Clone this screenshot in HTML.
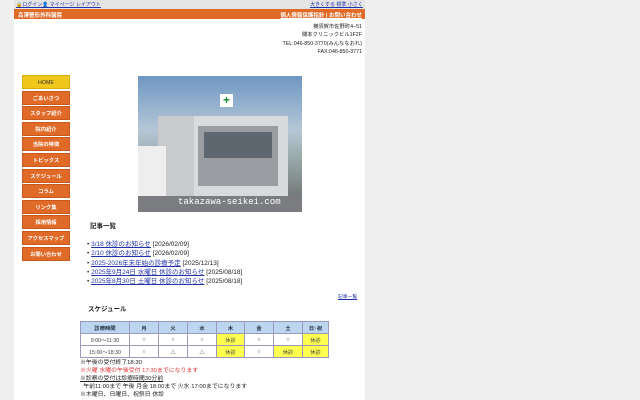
<!DOCTYPE html>
<html><head><meta charset="utf-8"><style>
*{margin:0;padding:0;box-sizing:border-box}
body{width:640px;height:400px;overflow:hidden;background:#efefef;font-family:"Liberation Sans","Noto Sans CJK JP",sans-serif;font-size:6px;color:#222}
#pg{position:absolute;left:14px;top:0;width:351px;height:400px;background:#fff}
.top{position:absolute;left:0;top:0;width:351px;height:9px;background:#e4e4e4}
.top a{color:#2233aa;text-decoration:underline;font-size:5px;position:absolute;top:1px}
.bar{position:absolute;left:0;top:9px;width:351px;height:10px;background:#e06a28;color:#fff;font-weight:bold;font-size:5.5px}
.addr{position:absolute;right:3px;top:23px;text-align:right;font-size:5.3px;line-height:8.3px;color:#222}
.menu{position:absolute;left:8px;top:75px;width:48px}
.menu div{height:14px;margin-bottom:1.6px;background:#e06a28;color:#fff;font-size:5.3px;font-weight:bold;text-align:center;line-height:14px;border:1px solid #c9581c}
.menu div.h{background:#f2c71d;color:#333;border-color:#d9b010;font-weight:normal}
.photo{position:absolute;left:124px;top:76px;width:164px;height:136px;background:linear-gradient(#6f97c4,#b5c7d6 40%,#9aa 60%,#666 100%);overflow:hidden}
h3{position:absolute;font-size:6.5px;font-weight:bold}
ul{position:absolute;left:73px;top:240px;list-style:none;font-size:6.5px;line-height:9.3px}
ul li:before{content:"• ";color:#333}
ul a{color:#2233aa}
table{position:absolute;left:66px;top:321px;border-collapse:collapse;font-size:5.3px}
td{border:1px solid #99b;height:12px;text-align:center;color:#444}
tr:first-child td{background:#bcd6ef;font-weight:bold;color:#234}
td.y{background:#ffff50}
.notes{position:absolute;left:66px;top:359px;font-size:5.9px;line-height:8px}
</style></head><body>
<div id="pg">
<div class="top"><a style="left:2px">🔒ログイン</a><a style="left:28px">👤 マイページ レイアウト</a><a style="left:296px">大きくする 標準 小さくする</a></div>
<div class="bar"><span style="position:absolute;left:4px;top:2px">高澤整形外科醫院</span><span style="position:absolute;right:3px;top:2px;text-decoration:underline">個人情報保護指針 | お問い合わせ</span></div>
<div class="addr">横須賀市佐野町4−51<br>關本クリニックビル1F2F<br>TEL:046-850-3770(みんななおれ)<br>FAX:046-850-3771</div>
<div class="menu"><div class="h">HOME</div><div>ごあいさつ</div><div>スタッフ紹介</div><div>院内紹介</div><div>当院の特徴</div><div>トピックス</div><div>スケジュール</div><div>コラム</div><div>リンク集</div><div>採用情報</div><div>アクセスマップ</div><div>お問い合わせ</div></div>
<div class="photo">
<div style="position:absolute;left:20px;top:40px;width:130px;height:80px;background:#d8dadc"></div>
<div style="position:absolute;left:60px;top:50px;width:80px;height:60px;background:#9a9ea2"></div>
<div style="position:absolute;left:66px;top:56px;width:68px;height:26px;background:#5e6670"></div>
<div style="position:absolute;left:20px;top:40px;width:36px;height:80px;background:#c8cacc"></div>
<div style="position:absolute;left:82px;top:18px;width:13px;height:13px;background:#fff;color:#1a8a3a;font-size:12px;line-height:13px;text-align:center;font-weight:bold">+</div>
<div style="position:absolute;left:0;top:70px;width:28px;height:55px;background:#eee"></div>
<div style="position:absolute;left:0;top:120px;width:164px;height:16px;background:#7a7c80"></div>
<div style="position:absolute;left:40px;top:121px;color:#fff;font-size:9px;font-family:'Liberation Mono',monospace">takazawa-seikei.com</div>
</div>
<h3 style="left:76px;top:220px">記事一覧</h3>
<ul><li><a><u>3/18 休診のお知らせ</u></a> [2026/02/09]</li><li><a><u>2/10 休診のお知らせ</u></a> [2026/02/09]</li><li><a><u>2025-2026年末年始の診療予定</u></a> [2025/12/13]</li><li><a><u>2025年9月24日 水曜日 休診のお知らせ</u></a> [2025/08/18]</li><li><a><u>2025年8月30日 土曜日 休診のお知らせ</u></a> [2025/08/18]</li></ul>
<div style="position:absolute;left:324px;top:293px;font-size:4.8px;color:#2233aa;text-decoration:underline">記事一覧</div>
<h3 style="left:74px;top:303px">スケジュール</h3>
<table><tr><td style="width:49px">診療時間</td><td style="width:29px">月</td><td style="width:29px">火</td><td style="width:29px">水</td><td style="width:28px">木</td><td style="width:29px">金</td><td style="width:29px">土</td><td style="width:26px">日･祝</td></tr>
<tr><td>9:00〜11:30</td><td>○</td><td>○</td><td>○</td><td class="y">休診</td><td>○</td><td>○</td><td class="y">休診</td></tr>
<tr><td>15:00〜18:30</td><td>○</td><td>△</td><td>△</td><td class="y">休診</td><td>○</td><td class="y">休診</td><td class="y">休診</td></tr></table>
<div class="notes">※午後の受付終了18:30<br><span style="color:#d33">※火曜 水曜の午後受付 17:30までになります</span><br><u>※診察の受付は診療時間30分前</u><br>&nbsp;&nbsp;午前11:00まで 午後 月金 18:00まで 火水 17:00までになります<br>※木曜日、日曜日、祝祭日 休診</div>
</div>
</body></html>
